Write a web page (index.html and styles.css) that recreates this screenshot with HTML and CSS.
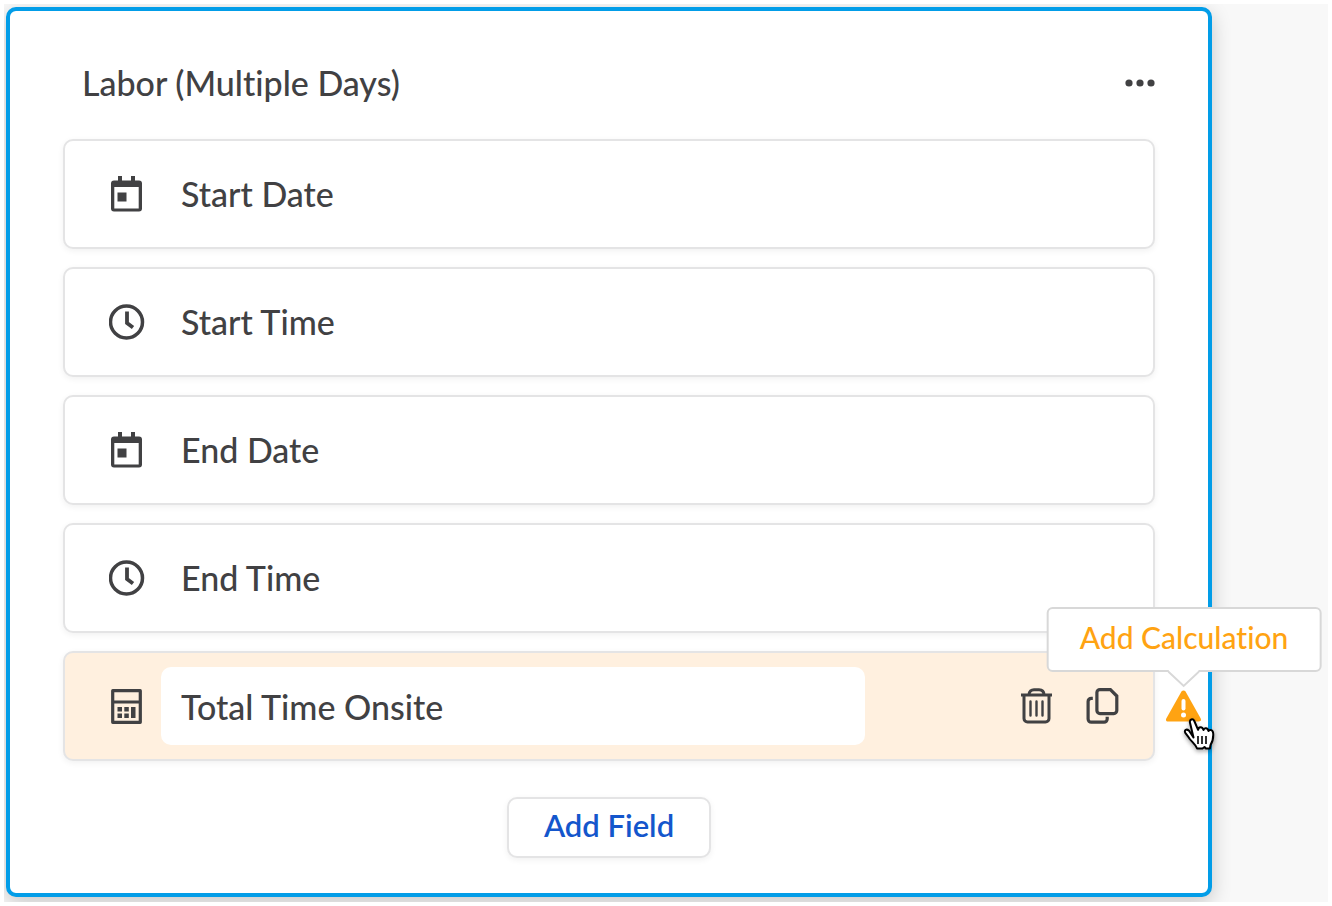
FILE: index.html
```html
<!DOCTYPE html>
<html lang="en">
<head>
<meta charset="utf-8">
<title>Labor (Multiple Days)</title>
<link rel="stylesheet" href="styles.css">
</head>
<body>
<svg class="sprite" aria-hidden="true">
  <symbol id="calendar" viewBox="0 0 36 36">
    <path fill="currentColor" fill-rule="evenodd" d="M9 0h4v4.500h9V0h4v4.500h4a3 3 0 0 1 3 3v25a3 3 0 0 1-3 3H5a3 3 0 0 1-3-3v-25a3 3 0 0 1 3-3h4zM5.300 11v21.500h24.400V11zM8.500 16.500h9v9h-9z"/>
  </symbol>
  <symbol id="clock" viewBox="0 0 36 36">
    <circle cx="17.500" cy="18" r="16" fill="none" stroke="currentColor" stroke-width="3.500"/>
    <path fill="none" stroke="currentColor" stroke-width="3.800" d="M18 7.500V19l6 4.500"/>
  </symbol>
</svg>
<main class="canvas">
  <section class="panel">
    <header class="panel-header">
      <h1 class="title">Labor (Multiple Days)</h1>
      <button class="icon-button" type="button" aria-label="More options">
        <svg class="dots" viewBox="0 0 30 8"><g fill="currentColor"><circle cx="4" cy="4" r="3.600"/><circle cx="15" cy="4" r="3.600"/><circle cx="26" cy="4" r="3.600"/></g></svg>
      </button>
    </header>
    <ul class="fields">
      <li class="field"><svg class="icon"><use href="#calendar"/></svg><span class="name">Start Date</span></li>
      <li class="field"><svg class="icon"><use href="#clock"/></svg><span class="name">Start Time</span></li>
      <li class="field"><svg class="icon"><use href="#calendar"/></svg><span class="name">End Date</span></li>
      <li class="field"><svg class="icon"><use href="#clock"/></svg><span class="name">End Time</span></li>
      <li class="field field-active">
        <svg class="icon" viewBox="0 0 36 36">
          <path fill="none" stroke="currentColor" stroke-width="3.200" stroke-linejoin="round" d="M3.700 2.700h27.600v31.600H3.700zM4 14h27"/>
          <path fill="currentColor" d="M8.500 19H13v4.500H8.500zM15.300 19h4.500v4.500h-4.500zM8.500 25.500H13V30H8.500zM15.300 25.500h4.500V30h-4.500zM22 19h4.500v11H22z"/>
        </svg>
        <input class="name-input" type="text" aria-label="Field name" value="Total Time Onsite">
        <div class="actions">
          <button class="icon-button" type="button" aria-label="Delete field">
            <svg class="icon" viewBox="0 0 36 36">
              <g fill="none" stroke="currentColor">
                <path stroke-width="3" d="M3 7h31M6 7.500v23A3.500 3.500 0 0 0 9.500 34h18a3.500 3.500 0 0 0 3.500-3.500v-23"/>
                <path stroke-width="3" d="M11 7c0-4 2.500-5.300 5-5.300h5c2.500 0 5 1.300 5 5.300"/>
                <path stroke-width="2.400" stroke-linecap="round" d="M12.500 13.500v14M18.500 13.500v14M24.500 13.500v14"/>
              </g>
            </svg>
          </button>
          <button class="icon-button" type="button" aria-label="Duplicate field">
            <svg class="icon" viewBox="0 0 36 36">
              <g fill="none" stroke="currentColor" stroke-width="3.200">
                <path d="M15.900 1.600h10.500l6.400 6.400v14.600a3 3 0 0 1-3 3H15.900a3 3 0 0 1-3-3v-18a3 3 0 0 1 3-3z"/>
                <path d="M8.800 10.300H7.300a3.200 3.200 0 0 0-3.200 3.200V31a3.200 3.200 0 0 0 3.200 3.200H20a3.200 3.200 0 0 0 3.200-3.200v-2.200"/>
              </g>
            </svg>
          </button>
        </div>
        <div class="warning">
          <button class="icon-button" type="button" aria-describedby="tip" aria-label="Warning">
            <svg class="icon" viewBox="0 0 36 36">
              <path fill="#ffa312" d="M15.500 2.500c1-1.500 3-1.500 4 0l15.200 27c.8 1.800 0 3-2 3H2.300c-2 0-2.800-1.200-2-3z"/>
              <path stroke="#fff" stroke-width="4" stroke-linecap="round" d="M17.500 12v7.500"/><circle cx="17.500" cy="26" r="2.500" fill="#fff"/>
            </svg>
          </button>
          <div class="tooltip" id="tip" role="tooltip">Add Calculation
            <svg class="tooltip-arrow" viewBox="0 0 32 18"><path fill="#fff" d="M1 0v2l15 14L31 2V0z"/><path fill="none" stroke="#d8d8d8" stroke-width="2" d="M0 1l16 15L32 1"/></svg>
          </div>
          <svg class="cursor" viewBox="0 0 32 34">
            <path fill="#fff" stroke="#000" stroke-width="2" stroke-linejoin="round" d="M10.500 20.500 7 5.800C6.200 2.500 9.800 1 11.300 4l3.800 8.800c.5-3.300 4.400-3.300 5.400.2.600-2.500 4.200-2.400 5 1 1-1.800 4.500-1.500 4.700 2.500.3 5-.7 8.500-2.700 11.500l-.6 3.500h-4l-1.400-1.500-2 1.500h-5.400c-1.400-4-5-6.500-7.300-9.500-1.800-3-3.300-4.500-4.500-6.200-1.500-3 1.300-4.200 3.800-2z"/>
            <path stroke="#000" stroke-width="1.600" d="M15 19v8M19 19v8M23 19v8"/>
          </svg>
        </div>
      </li>
    </ul>
    <button class="add-field" type="button">Add Field</button>
  </section>
</main>
</body>
</html>
```
FILE: styles.css
```css
* {
  box-sizing: border-box;
}

body {
  margin: 0;
  padding: 4px;
  background: #fff;
  color: #414143;
  font-family: Lato, sans-serif;
  font-size: 34px;
  font-weight: 500;
  font-variant-ligatures: none;
  line-height: 44px;
}

button,
input {
  font: inherit;
  color: inherit;
}

svg {
  display: block;
}

.sprite {
  position: absolute;
  width: 0;
  height: 0;
}

.canvas {
  min-height: calc(100vh - 8px);
  padding: 3px 116px 5px 2px;
  background: #f8f8f8;
  overflow: hidden;
}

.panel {
  display: flex;
  flex-direction: column;
  padding: 50px 53px 35px;
  border: 4px solid #029de8;
  border-radius: 10px;
  background: #fff;
  box-shadow: 0 6px 20px rgba(0, 0, 0, 0.2);
}

.panel-header {
  display: flex;
  align-items: center;
  justify-content: space-between;
  margin-bottom: 34px;
  padding-left: 19px;
}

.title {
  margin: 0;
  font-size: 34px;
  font-weight: 500;
}

.icon-button {
  display: block;
  padding: 0;
  border: 0;
  background: none;
  cursor: pointer;
}

.dots {
  width: 30px;
  height: 8px;
}

.fields {
  display: grid;
  gap: 18px;
  margin: 0 0 36px;
  padding: 0;
  list-style: none;
}

.field {
  position: relative;
  display: flex;
  align-items: center;
  gap: 16px;
  min-height: 110px;
  padding: 14px 33px 14px 44px;
  border: 2px solid #e4e4e5;
  border-radius: 10px;
  background: #fff;
  box-shadow: 0 2px 6px rgba(0, 0, 0, 0.06);
}

.field-active {
  background: #fff0df;
}

.icon {
  flex: none;
  width: 36px;
  height: 36px;
}

.name {
  padding-left: 20px;
}

.name-input {
  flex: 0 1 704px;
  min-width: 0;
  height: 78px;
  padding: 0 20px;
  border: 0;
  border-radius: 10px;
  background: #fff;
}

.actions {
  display: flex;
  gap: 30px;
  margin-left: auto;
}

.warning {
  position: absolute;
  top: 36px;
  left: calc(100% + 13px);
}

.tooltip {
  position: absolute;
  bottom: 53px;
  left: 50%;
  padding: 8px 31px 13px;
  border: 2px solid #d8d8d8;
  border-radius: 6px;
  background: #fff;
  color: #ffa312;
  font-size: 30px;
  line-height: 40px;
  white-space: nowrap;
  transform: translateX(-50%);
}

.tooltip-arrow {
  position: absolute;
  top: 100%;
  left: calc(50% - 16px);
  width: 32px;
  height: 18px;
}

.cursor {
  position: absolute;
  top: 28px;
  left: 17px;
  width: 32px;
  height: 34px;
  filter: drop-shadow(0 2px 2px rgba(0, 0, 0, 0.35));
  pointer-events: none;
}

.add-field {
  align-self: center;
  padding: 6px 35px 11px;
  border: 2px solid #e4e4e5;
  border-radius: 10px;
  background: #fff;
  box-shadow: 0 2px 6px rgba(0, 0, 0, 0.06);
  color: #1456cc;
  font-size: 31px;
  font-weight: 600;
  line-height: 40px;
  cursor: pointer;
}
```
